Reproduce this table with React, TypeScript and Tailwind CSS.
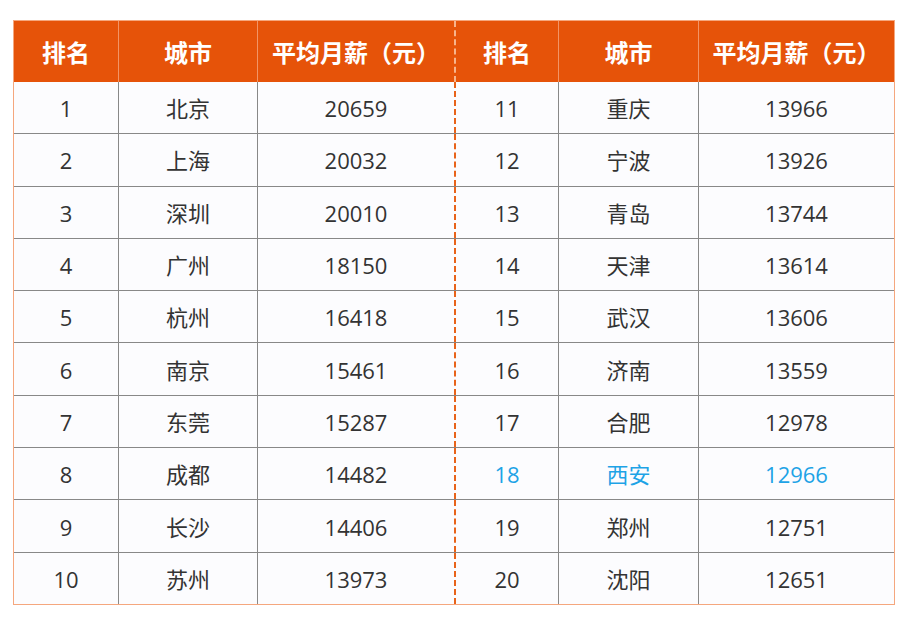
const cols = 'grid grid-cols-[104px_139px_197px_104px_140px_196px]';

const left = [
  ['1', '北京', '20659'],
  ['2', '上海', '20032'],
  ['3', '深圳', '20010'],
  ['4', '广州', '18150'],
  ['5', '杭州', '16418'],
  ['6', '南京', '15461'],
  ['7', '东莞', '15287'],
  ['8', '成都', '14482'],
  ['9', '长沙', '14406'],
  ['10', '苏州', '13973'],
];

const right = [
  ['11', '重庆', '13966'],
  ['12', '宁波', '13926'],
  ['13', '青岛', '13744'],
  ['14', '天津', '13614'],
  ['15', '武汉', '13606'],
  ['16', '济南', '13559'],
  ['17', '合肥', '12978'],
  ['18', '西安', '12966'],
  ['19', '郑州', '12751'],
  ['20', '沈阳', '12651'],
];

const heads = ['排名', '城市', '平均月薪（元）', '排名', '城市', '平均月薪（元）'];

export default function App() {
  return (
    <div className="w-[907px] h-[626px] bg-white pt-[20px] pl-[13px] font-['Open_Sans','Noto_Sans_CJK_SC',sans-serif]">
      <div className="w-[882px] border border-[#f5a77e]">
        <div className={`${cols} h-[61px] bg-[#e65309] text-white font-bold text-[24px]`}>
          {heads.map((h, i) => (
            <div
              key={i}
              className={`flex items-center justify-center pt-[2px] ${
                i === 3
                  ? 'border-l-2 border-dashed border-[#f7b48c]'
                  : i > 0
                  ? 'border-l border-[#f29466]'
                  : ''
              }`}
            >
              {h}
            </div>
          ))}
        </div>
        <div className="flex flex-col h-[522px] bg-[#fcfcfe] text-[#333] text-[22px]">
          {left.map((row, r) => {
            const cells = [...row, ...right[r]];
            const last = r === left.length - 1;
            return (
              <div key={r} className={`${cols} flex-1 ${last ? '' : 'border-b border-[#888]'}`}>
                {cells.map((c, i) => (
                  <div
                    key={i}
                    className={`flex items-center justify-center pt-[2px] ${
                      i === 3
                        ? 'border-l-2 border-dashed border-[#e8631a]'
                        : i > 0
                        ? 'border-l border-[#888]'
                        : ''
                    } ${r === 7 && i >= 3 ? 'text-[#1ea3e6]' : ''}`}
                  >
                    {c}
                  </div>
                ))}
              </div>
            );
          })}
        </div>
      </div>
    </div>
  );
}
